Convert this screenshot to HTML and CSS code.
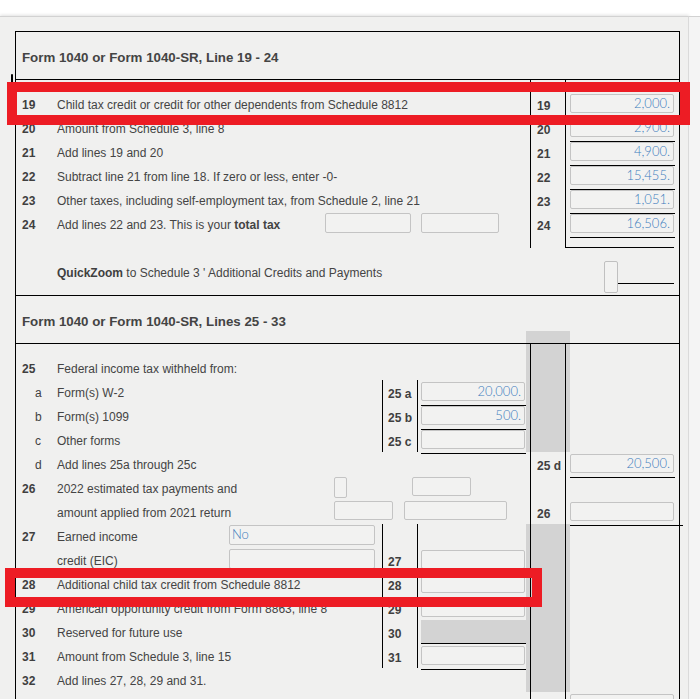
FILE: index.html
```html
<!DOCTYPE html>
<html>
<head>
<meta charset="utf-8">
<link rel="stylesheet" href="styles.css">
</head>
<body>
<div class="top"></div>
<div class="page">
  <div class="panel">
    <div class="box">
      <div class="hd"><div class="t">Form 1040 or Form 1040-SR, Line 19 - 24</div></div>

      <div class="r sp"><div class="b"><div class="bl"></div></div></div>
      <div class="r">
        <div class="n">19</div><div class="d w">Child tax credit or credit for other dependents from Schedule 8812</div>
        <div class="b"><div class="bl">19</div></div>
        <div class="a"><div class="ul"><div class="f">2,000.</div></div></div>
      </div>
      <div class="r">
        <div class="n">20</div><div class="d w">Amount from Schedule 3, line 8</div>
        <div class="b"><div class="bl">20</div></div>
        <div class="a"><div class="ul"><div class="f">2,900.</div></div></div>
      </div>
      <div class="r">
        <div class="n">21</div><div class="d w">Add lines 19 and 20</div>
        <div class="b"><div class="bl">21</div></div>
        <div class="a"><div class="ul"><div class="f">4,900.</div></div></div>
      </div>
      <div class="r">
        <div class="n">22</div><div class="d w">Subtract line 21 from line 18. If zero or less, enter -0-</div>
        <div class="b"><div class="bl">22</div></div>
        <div class="a"><div class="ul"><div class="f">15,455.</div></div></div>
      </div>
      <div class="r">
        <div class="n">23</div><div class="d w">Other taxes, including self-employment tax, from Schedule 2, line 21</div>
        <div class="b"><div class="bl">23</div></div>
        <div class="a"><div class="ul"><div class="f">1,051.</div></div></div>
      </div>
      <div class="r">
        <div class="n">24</div>
        <div class="d w flx"><span class="lbl l24">Add lines 22 and 23. This is your <b>total tax</b></span><span class="f box24a"></span><span class="f box24b"></span></div>
        <div class="b"><div class="bl">24</div></div>
        <div class="a"><div class="ul"><div class="f">16,506.</div></div></div>
      </div>
      <div class="r sp"><div class="b"><div class="bl"></div></div><div class="a"><div class="endline"></div></div></div>

      <div class="qz">
        <div class="t"><b>QuickZoom</b> to Schedule 3 ' Additional Credits and Payments</div>
        <div class="a qa"><div class="btn"></div><div class="qline"></div></div>
      </div>

      <div class="hd"><div class="t">Form 1040 or Form 1040-SR, Lines 25 - 33</div><div class="gb"></div></div>

      <div class="r sp"><div class="b g"><div class="bl"></div></div></div>
      <div class="r">
        <div class="n">25</div><div class="d">Federal income tax withheld from:</div>
        <div class="b g"><div class="bl"></div></div>
      </div>
      <div class="r">
        <div class="n sub">a</div><div class="d">Form(s) W-2</div>
        <div class="m ln">25 a</div>
        <div class="ma"><div class="ul"><div class="f">20,000.</div></div></div>
        <div class="b g"><div class="bl"></div></div>
      </div>
      <div class="r">
        <div class="n sub">b</div><div class="d">Form(s) 1099</div>
        <div class="m ln">25 b</div>
        <div class="ma"><div class="ul"><div class="f">500.</div></div></div>
        <div class="b g"><div class="bl"></div></div>
      </div>
      <div class="r">
        <div class="n sub">c</div><div class="d">Other forms</div>
        <div class="m ln">25 c</div>
        <div class="ma"><div class="ul"><div class="f"></div></div></div>
        <div class="b g"><div class="bl"></div></div>
      </div>
      <div class="r">
        <div class="n sub">d</div><div class="d">Add lines 25a through 25c</div>
        <div class="b"><div class="bl">25 d</div></div>
        <div class="a"><div class="ul"><div class="f">20,500.</div></div></div>
      </div>
      <div class="r">
        <div class="n">26</div>
        <div class="d w flx"><span class="lbl l26">2022 estimated tax payments and</span><span class="f sq"></span><span class="f b26a"></span></div>
        <div class="b"><div class="bl"></div></div>
      </div>
      <div class="r">
        <div class="d w flx"><span class="lbl l26">amount applied from 2021 return</span><span class="f b26b"></span><span class="f b26c"></span></div>
        <div class="b"><div class="bl">26</div></div>
        <div class="a"><div class="ul long"><div class="f"></div></div></div>
      </div>
      <div class="r">
        <div class="n">27</div>
        <div class="d flx"><span class="lbl l27">Earned income</span><span class="f no">No</span></div>
        <div class="m ln"></div>
        <div class="b g"><div class="bl"></div></div>
      </div>
      <div class="r">
        <div class="d flx"><span class="lbl l27">credit (EIC)</span><span class="f no"></span></div>
        <div class="m ln">27</div>
        <div class="ma"><div class="ul"><div class="f"></div></div></div>
        <div class="b g"><div class="bl"></div></div>
      </div>
      <div class="r">
        <div class="n">28</div><div class="d">Additional child tax credit from Schedule 8812</div>
        <div class="m ln">28</div>
        <div class="ma"><div class="ul"><div class="f"></div></div></div>
        <div class="b g"><div class="bl"></div></div>
      </div>
      <div class="r">
        <div class="n">29</div><div class="d">American opportunity credit from Form 8863, line 8</div>
        <div class="m ln">29</div>
        <div class="ma"><div class="ul"><div class="f"></div></div></div>
        <div class="b g"><div class="bl"></div></div>
      </div>
      <div class="r">
        <div class="n">30</div><div class="d">Reserved for future use</div>
        <div class="m ln">30</div>
        <div class="ma"><div class="ul shade"></div></div>
        <div class="b g"><div class="bl"></div></div>
      </div>
      <div class="r">
        <div class="n">31</div><div class="d">Amount from Schedule 3, line 15</div>
        <div class="m ln">31</div>
        <div class="ma"><div class="ul"><div class="f"></div></div></div>
        <div class="b g"><div class="bl"></div></div>
      </div>
      <div class="r">
        <div class="n">32</div><div class="d">Add lines 27, 28, 29 and 31.</div>
        <div class="b g"><div class="bl"></div></div>
      </div>
      <div class="r">
        <div class="b"><div class="bl"></div></div>
        <div class="a"><div class="ul"><div class="f"></div></div></div>
      </div>
    </div>
  </div>
  <div class="aside"></div>
</div>
<div class="tick"></div>
<div class="hl hl1"></div>
<div class="hl hl2"></div>
</body>
</html>
```

FILE: styles.css
```css
html, body {
  margin: 0;
  padding: 0;
  background: #ffffff;
  height: 100%;
  overflow: hidden;
}
body {
  font-family: "Liberation Sans", Arial, sans-serif;
  font-size: 12px;
  color: #444444;
}
.top {
  height: 16px;
  background: #ffffff;
}
.page {
  display: flex;
  height: calc(100% - 16px);
}
.panel {
  width: 689px;
  flex: none;
  box-sizing: border-box;
  background: #f0f0ef;
  border-top: 1px solid #d2d2d2;
  border-right: 1px solid #dadada;
  box-shadow: 0 -1px 3px rgba(0, 0, 0, 0.12);
  padding: 14px 0 0 15px;
  overflow: hidden;
}
.aside {
  flex: 1;
  background: #f4f4f4;
  border-top: 1px solid #d2d2d2;
}
.box {
  width: 665px;
  box-sizing: border-box;
  border: 1px solid #000;
  border-bottom: none;
}

/* headers */
.hd {
  height: 47px;
  border-bottom: 1px solid #000;
  display: grid;
  grid-template-columns: 41px 325px 36px 108px 44px 109px;
  grid-template-rows: 47px;
}
.hd .t {
  grid-column: 1 / 5;
  grid-row: 1;
  padding-left: 6px;
  font-weight: bold;
  font-size: 13.3px;
  line-height: 51px;
  color: #444;
  white-space: nowrap;
}
.hd .gb {
  grid-column: 5;
  grid-row: 1;
  align-self: end;
  height: 12px;
  background: #d3d3d3;
}

/* rows */
.r {
  display: grid;
  grid-template-columns: 41px 325px 36px 108px 44px 109px;
  grid-template-rows: 24px;
  height: 24px;
}
.r.sp {
  height: 12px;
  grid-template-rows: 12px;
}
.n {
  grid-column: 1;
  grid-row: 1;
  padding-left: 6px;
  font-weight: bold;
  line-height: 27px;
  color: #3f3f3f;
}
.n.sub {
  padding-left: 19px;
  font-weight: normal;
}
.d {
  grid-column: 2;
  grid-row: 1;
  line-height: 27px;
  white-space: nowrap;
}
.d.w {
  grid-column: 2 / 5;
}
.flx {
  display: flex;
  align-items: flex-start;
}
.lbl {
  flex: none;
}
.l24 { width: 268px; }
.l26 { width: 277px; }
.l27 { width: 172px; }

.m {
  grid-column: 3;
  grid-row: 1;
}
.m.ln {
  border-left: 1px solid #000;
  border-right: 1px solid #000;
  box-sizing: border-box;
  padding-left: 5px;
  font-weight: bold;
  line-height: 28px;
  white-space: nowrap;
  color: #3f3f3f;
}
.ma {
  grid-column: 4;
  grid-row: 1;
}
.ma .ul {
  margin-left: 3px;
}
.b {
  grid-column: 5;
  grid-row: 1;
  padding-left: 4px;
}
.b.g {
  background: #d3d3d3;
}
.bl {
  width: 36px;
  height: 100%;
  box-sizing: border-box;
  border-left: 1px solid #000;
  border-right: 1px solid #000;
  padding-left: 6px;
  font-weight: bold;
  line-height: 28px;
  white-space: nowrap;
  color: #3f3f3f;
}
.a {
  grid-column: 6;
  grid-row: 1;
}
.ul {
  width: 105px;
  height: 23px;
  border-bottom: 1px solid #000;
}
.ul.long {
  width: 113px;
}
.ul.shade {
  background: #d3d3d3;
}
.endline {
  margin-left: -5px;
  width: 109px;
  height: 11px;
  border-bottom: 1px solid #000;
}

/* fields */
.f {
  display: block;
  box-sizing: border-box;
  width: 104px;
  height: 19px;
  margin-top: 2px;
  border: 1px solid #c4c4c4;
  border-radius: 2px;
  background: #f2f2f1;
  color: #3d7dbd;
  font-family: Lato, "Open Sans", sans-serif;
  font-weight: 300;
  font-size: 13px;
  line-height: 17px;
  text-align: right;
  padding-right: 3px;
}
.box24a { width: 86px; height: 20px; margin-top: 1px; }
.box24b { width: 78px; height: 20px; margin-top: 1px; margin-left: 10px; }
.sq { width: 13px; height: 21px; margin-top: 1px; }
.b26a { width: 59px; height: 19px; margin-top: 1px; margin-left: 65px; }
.b26b { width: 59px; height: 19px; margin-top: 1px; }
.b26c { width: 103px; height: 19px; margin-top: 1px; margin-left: 11px; }
.no {
  width: 146px;
  height: 20px;
  margin-top: 1px;
  text-align: left;
  padding-left: 2px;
  line-height: 16px;
}

/* quickzoom */
.qz {
  height: 47px;
  border-bottom: 1px solid #000;
  display: grid;
  grid-template-columns: 41px 325px 36px 108px 44px 109px;
  grid-template-rows: 47px;
}
.qz .t {
  grid-column: 2 / 5;
  grid-row: 1;
  line-height: 51px;
  white-space: nowrap;
}
.qz .t b {
  color: #3f3f3f;
}
.qa {
  display: flex;
  align-items: flex-start;
  padding-left: 34px;
}
.btn {
  width: 14px;
  height: 32px;
  margin-top: 13px;
  box-sizing: border-box;
  border: 1px solid #c0c0c0;
  border-radius: 2px;
  background: #f2f2f1;
}
.qline {
  width: 56px;
  height: 35px;
  border-bottom: 1px solid #000;
}

/* overlays */
.tick {
  position: absolute;
  left: 11px;
  top: 74px;
  width: 2px;
  height: 9px;
  background: #000;
  border-radius: 1px 1px 0 0;
}
.hl {
  position: absolute;
  box-sizing: border-box;
  border: 10px solid #ed1c24;
}
.hl1 {
  left: 7px;
  top: 82px;
  width: 683px;
  height: 43px;
}
.hl2 {
  left: 5px;
  top: 568px;
  width: 537px;
  height: 39px;
}
```
